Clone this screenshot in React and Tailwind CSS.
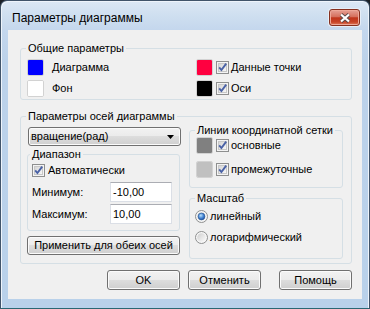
import React from "react";

const Swatch = ({ fill }) => (
  <div className="w-[17px] h-[17px] shrink-0 rounded-[2px] border border-[#d2d2d2] bg-white">
    <div className={`w-full h-full rounded-[1px] ${fill}`} />
  </div>
);

const Check = () => (
  <svg width="13" height="13" viewBox="0 0 13 13" className="shrink-0">
    <defs>
      <linearGradient id="cbg" x1="0" y1="0" x2="1" y2="1">
        <stop offset="0" stopColor="#d4d4d4" />
        <stop offset="1" stopColor="#f9f9f9" />
      </linearGradient>
    </defs>
    <rect x="0.5" y="0.5" width="12" height="12" fill="#f4f4f4" stroke="#8e8f8f" />
    <rect x="2.5" y="2.5" width="8" height="8" fill="url(#cbg)" stroke="#c8c8c8" />
    <path d="M3.2 6.4 L5.4 9 L10.2 2.6" fill="none" stroke="#4a62a6" strokeWidth="1.9" />
  </svg>
);

const Radio = ({ on }) => (
  <svg width="13" height="13" viewBox="0 0 13 13" className="shrink-0">
    <defs>
      <linearGradient id="rbg" x1="0" y1="0" x2="1" y2="1">
        <stop offset="0" stopColor="#cfcfcf" />
        <stop offset="1" stopColor="#fbfbfb" />
      </linearGradient>
      <radialGradient id="rdot" cx="0.4" cy="0.35" r="0.7">
        <stop offset="0" stopColor="#b8e0fb" />
        <stop offset="0.6" stopColor="#3f7fd0" />
        <stop offset="1" stopColor="#1c4f9c" />
      </radialGradient>
    </defs>
    <circle cx="6.5" cy="6.5" r="6" fill="#f6f6f6" stroke="#8e8f8f" />
    <circle cx="6.5" cy="6.5" r="4.3" fill="url(#rbg)" />
    {on && <circle cx="6.5" cy="6.5" r="3.4" fill="url(#rdot)" stroke="#24508f" strokeWidth="0.6" />}
  </svg>
);

const btn =
  "h-[20px] w-[73px] rounded-[3px] border border-[#707070] bg-[linear-gradient(180deg,#f2f2f2_0%,#ebebeb_50%,#dddddd_50%,#cfcfcf_100%)] shadow-[inset_0_0_0_1px_#fbfbfb] text-center";

export default function App() {
  return (
    <div className="w-[370px] h-[309px] bg-[#1b2026] font-['Liberation_Sans',Arial,sans-serif] text-[11px] leading-[13px] text-black">
      <div className="w-full h-full flex flex-col rounded-t-[7px] border border-[#41546a] border-b-[#2b6773] bg-[linear-gradient(180deg,#dce8f5_0px,#cfdff0_14px,#c4d7ed_29px,#bcd2ea_60px,#b9d1ea_100%)] shadow-[inset_1px_1px_0_#eef4fb,inset_-1px_0_0_#eef4fb]">
        {/* Заголовок */}
        <div className="h-[29px] flex items-start justify-between pl-[11px] pr-[9px]">
          <div className="pt-[10px] text-[12px] leading-[15px]">Параметры диаграммы</div>
          <div className="mt-[8px] w-[31px] h-[17px] rounded-[3px] border border-[#86301f] bg-[linear-gradient(180deg,#e6a195_0%,#d5705d_45%,#c0351b_52%,#c74428_80%,#e07c5c_100%)] shadow-[inset_0_0_0_1px_#eea898,0_0_0_1px_#e6eef8] flex items-center justify-center">
            <svg width="12" height="10" viewBox="0 0 12 10">
              <path d="M2 1.5 L10 8.5 M10 1.5 L2 8.5" stroke="#5a4a4a" strokeWidth="4" />
              <path d="M2 1.5 L10 8.5 M10 1.5 L2 8.5" stroke="#ffffff" strokeWidth="2.2" />
            </svg>
          </div>
        </div>

        {/* Клиентская область */}
        <div className="mx-[7px] h-[269px] bg-[#f0f0f0] pl-[12px] pr-[10px] flex flex-col">
          {/* Общие параметры */}
          <fieldset className="mt-[12px] w-[332px] rounded-[3px] border border-[#d5dfe5]">
            <legend className="ml-[5px] px-[2px]">Общие параметры</legend>
            <div className="flex pl-[6px] pt-[3px] pb-[1px]">
              <div className="w-[169px] flex flex-col gap-[2px]">
                <div className="h-[19px] flex items-center">
                  <Swatch fill="bg-[#0000ff]" />
                  <span className="ml-[8px]">Диаграмма</span>
                </div>
                <div className="h-[19px] flex items-center">
                  <Swatch fill="bg-white" />
                  <span className="ml-[8px]">Фон</span>
                </div>
              </div>
              <div className="flex flex-col gap-[2px]">
                <div className="h-[19px] flex items-center">
                  <Swatch fill="bg-[#ff0040]" />
                  <span className="ml-[3px]"><Check /></span>
                  <span className="ml-[2px]">Данные точки</span>
                </div>
                <div className="h-[19px] flex items-center">
                  <Swatch fill="bg-black" />
                  <span className="ml-[3px]"><Check /></span>
                  <span className="ml-[2px]">Оси</span>
                </div>
              </div>
            </div>
          </fieldset>

          {/* Параметры осей диаграммы */}
          <fieldset className="mt-[10px] w-[332px] rounded-[3px] border border-[#d5dfe5]">
            <legend className="ml-[5px] px-[2px]">Параметры осей диаграммы</legend>
            <div className="flex items-start gap-[9px] pl-[6px] pr-[8px] pb-[4px]">
              <div className="w-[153px] flex flex-col">
                <div className="mt-[4px] ml-[1px] w-[153px] h-[19px] rounded-[3px] border border-[#707070] bg-[linear-gradient(180deg,#f2f2f2_0%,#ebebeb_50%,#dddddd_50%,#cfcfcf_100%)] shadow-[inset_0_0_0_1px_#fbfbfb] flex items-center justify-between pl-[2px] pr-[6px]">
                  <span>вращение(рад)</span>
                  <svg width="7" height="4" viewBox="0 0 7 4">
                    <path d="M0 0 H7 L3.5 4 Z" fill="#000" />
                  </svg>
                </div>

                <fieldset className="mt-[2px] w-[153px] rounded-[3px] border border-[#d5dfe5]">
                  <legend className="ml-[2px] px-[2px]">Диапазон</legend>
                  <div className="pl-[4px] pr-[7px] pt-[3px] pb-[6px]">
                    <div className="h-[13px] flex items-center gap-[3px]">
                      <Check />
                      <span>Автоматически</span>
                    </div>
                    <div className="mt-[5px] h-[20px] flex items-center justify-between">
                      <span>Минимум:</span>
                      <div className="w-[62px] h-[20px] border border-[#dbdfe6] border-t-[#abadb3] bg-white pl-[2px] flex items-center">-10,00</div>
                    </div>
                    <div className="mt-[2px] h-[20px] flex items-center justify-between">
                      <span>Максимум:</span>
                      <div className="w-[62px] h-[20px] border border-[#dbdfe6] border-t-[#abadb3] bg-white pl-[2px] flex items-center">10,00</div>
                    </div>
                  </div>
                </fieldset>

                <button className="mt-[5px] h-[19px] w-[153px] rounded-[3px] border border-[#707070] bg-[linear-gradient(180deg,#f2f2f2_0%,#ebebeb_50%,#dddddd_50%,#cfcfcf_100%)] shadow-[inset_0_0_0_1px_#fbfbfb] text-center leading-[13px]">
                  Применить для обеих осей
                </button>
              </div>

              <div className="w-[154px] flex flex-col">
                <fieldset className="mt-[1px] rounded-[3px] border border-[#d5dfe5]">
                  <legend className="ml-[5px] px-[2px]">Линии координатной сетки</legend>
                  <div className="flex flex-col gap-[7px] pl-[6px] pb-[9px]">
                    <div className="h-[17px] flex items-center">
                      <Swatch fill="bg-[#808080]" />
                      <span className="ml-[3px]"><Check /></span>
                      <span className="ml-[2px]">основные</span>
                    </div>
                    <div className="h-[17px] flex items-center">
                      <Swatch fill="bg-[#c0c0c0]" />
                      <span className="ml-[3px]"><Check /></span>
                      <span className="ml-[2px]">промежуточные</span>
                    </div>
                  </div>
                </fieldset>

                <fieldset className="mt-[4px] rounded-[3px] border border-[#d5dfe5]">
                  <legend className="ml-[5px] px-[2px]">Масштаб</legend>
                  <div className="flex flex-col gap-[8px] pl-[5px] pt-[5px] pb-[14px]">
                    <div className="h-[13px] flex items-center gap-[2px]">
                      <Radio on />
                      <span>линейный</span>
                    </div>
                    <div className="h-[13px] flex items-center gap-[2px]">
                      <Radio />
                      <span>логарифмический</span>
                    </div>
                  </div>
                </fieldset>
              </div>
            </div>
          </fieldset>

          {/* Кнопки */}
          <div className="mt-[6px] flex justify-end">
            <button className={`${btn} border-[#3c7fb1] shadow-[inset_0_0_0_1px_#8ddcf7]`}>OK</button>
            <button className={`${btn} ml-[8px]`}>Отменить</button>
            <button className={`${btn} ml-[18px]`}>Помощь</button>
          </div>
        </div>
      </div>
    </div>
  );
}
